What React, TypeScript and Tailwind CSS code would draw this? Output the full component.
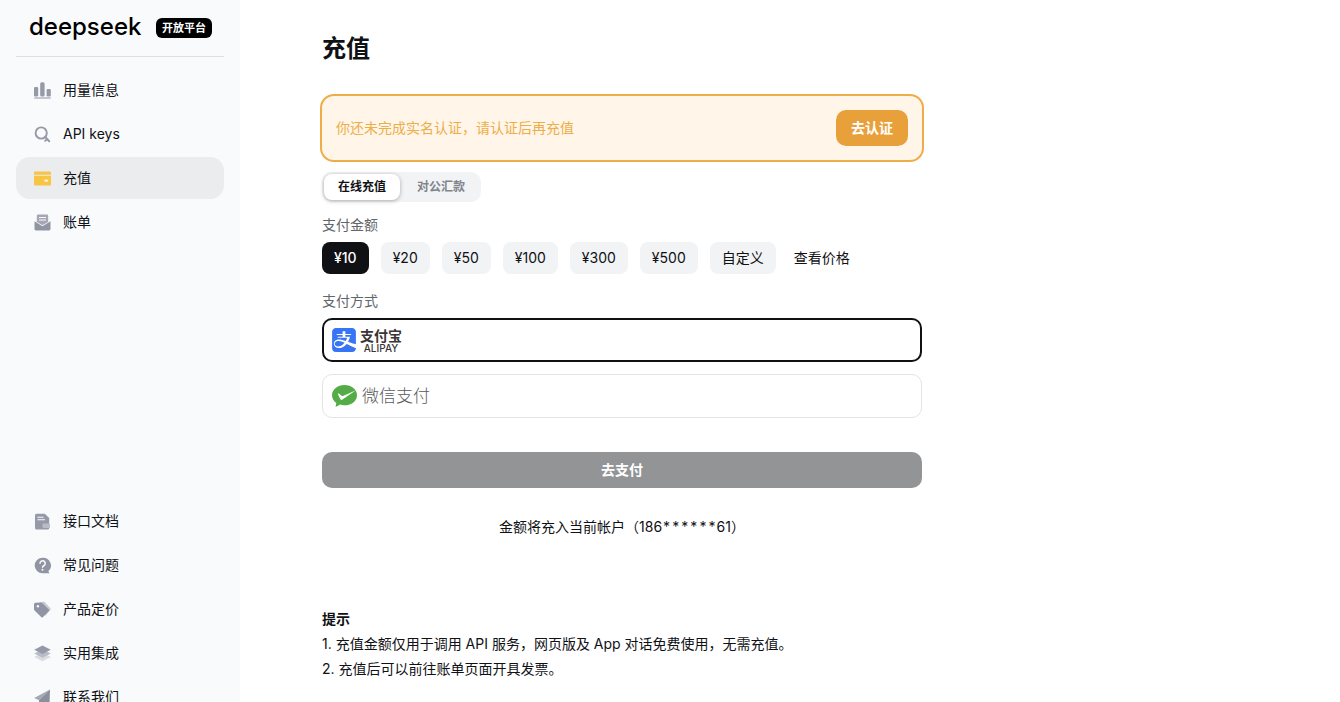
import React, { useState } from 'react';
import { SiAlipay } from 'react-icons/si';

type IconProps = { className?: string };

const IconUsage: React.FC<IconProps> = ({ className }) => (
    <svg className={className} viewBox="0 0 17 17" fill="#969aa8" aria-hidden="true">
        <rect x="0" y="5" width="4.2" height="9.5" rx="1.2" />
        <rect x="6.2" y="0.3" width="4.4" height="14.2" rx="1.5" />
        <rect x="12.6" y="7" width="4.2" height="7.5" rx="1.2" />
        <rect x="0" y="15" width="17" height="2" rx="1" fill="#c4c7cf" />
    </svg>
);

const IconKey: React.FC<IconProps> = ({ className }) => (
    <svg className={className} viewBox="0 0 17 17" fill="none" stroke="#969aa8" aria-hidden="true">
        <circle cx="7.2" cy="7" r="5.6" strokeWidth="1.9" />
        <path d="M11.3 11l3.9 4.2M13 13.200l-1.800 1.600" strokeWidth="2" strokeLinecap="round" />
    </svg>
);

const IconCard: React.FC<IconProps> = ({ className }) => (
    <svg className={className} viewBox="0 0 17 17" fill="#f7c443" aria-hidden="true">
        <path d="M1.300 1.500h14.400A1.300 1.300 0 0 1 17 2.800V4.700H0V2.800A1.300 1.300 0 0 1 1.300 1.500z" />
        <path d="M0 5.800h17v8.400a1.300 1.300 0 0 1-1.300 1.300H1.300A1.300 1.300 0 0 1 0 14.200z" />
        <rect x="10.300" y="9.400" width="4" height="2.400" rx="1.200" fill="#fff4d0" />
    </svg>
);

const IconBill: React.FC<IconProps> = ({ className }) => (
    <svg className={className} viewBox="0 0 17 17" aria-hidden="true">
        <path d="M2.800 1.800A1.300 1.300 0 0 1 4.100.5h8.800a1.300 1.300 0 0 1 1.300 1.300V8l-5.700 3.200L2.800 8z" fill="#a5a8b4" />
        <path d="M5 3.500h7M5 6h7" stroke="#f9fafc" strokeWidth="1.100" />
        <path d="M.5 7.200l8 5 8-5v7.900a1.400 1.400 0 0 1-1.400 1.400H1.900A1.400 1.400 0 0 1 .5 15.100z" fill="#9195a3" />
    </svg>
);

const IconDocs: React.FC<IconProps> = ({ className }) => (
    <svg className={className} viewBox="0 0 17 17" aria-hidden="true">
        <path d="M2.500.7h8.300l4.400 4.300v10a1.500 1.500 0 0 1-1.500 1.500H2.500A1.500 1.500 0 0 1 1 15V2.200A1.500 1.500 0 0 1 2.500.7z" fill="#969aa8" />
        <path d="M3.500 4.300h6M3.500 6.800h7.500" stroke="#f9fafc" strokeWidth="1.100" />
        <rect x="8.500" y="10.500" width="7.500" height="4.500" rx="1" fill="#b9bcc6" />
    </svg>
);

const IconFaq: React.FC<IconProps> = ({ className }) => (
    <svg className={className} viewBox="0 0 17 17" aria-hidden="true">
        <path d="M8.500.7a7.800 7.800 0 1 0 0 15.600h7l-1.200-2A7.800 7.800 0 0 0 8.500.7z" fill="#9195a3" />
        <path d="M6 6.300a2.600 2.600 0 1 1 4 2.200c-1 .6-1.500 1-1.500 1.800" fill="none" stroke="#f9fafc" strokeWidth="1.500" strokeLinecap="round" />
        <circle cx="8.500" cy="12.700" r="1" fill="#f9fafc" />
    </svg>
);

const IconPricing: React.FC<IconProps> = ({ className }) => (
    <svg className={className} viewBox="0 0 17 17" aria-hidden="true">
        <path d="M5.500 1.200L10.200.4 17 8l-5.800 7z" fill="#c9cbd3" />
        <path d="M0 3.300A1.500 1.500 0 0 1 1.400 1.800L6.900 1.400a1.800 1.800 0 0 1 1.300.5l6.700 6.500a1 1 0 0 1 0 1.500l-6.100 6.300a1 1 0 0 1-1.400 0L.6 9.500A1.800 1.800 0 0 1 0 8.200z" fill="#9195a3" />
        <circle cx="3.900" cy="5.200" r="1.200" fill="#f9fafc" />
    </svg>
);

const IconLayers: React.FC<IconProps> = ({ className }) => (
    <svg className={className} viewBox="0 0 17 17" aria-hidden="true">
        <path d="M8.500 7.800l8.300 4.200-8.300 4.300L.2 12z" fill="#dadce2" />
        <path d="M8.500 4.300l8.300 4.200-8.300 4.300L.2 8.500z" fill="#b9bcc6" />
        <path d="M8.500.6l8.300 4.200-8.300 4.300L.2 4.800z" fill="#969aa8" />
    </svg>
);

const IconContact: React.FC<IconProps> = ({ className }) => (
    <svg className={className} viewBox="0 0 17 17" aria-hidden="true">
        <path d="M16 .5L.2 9l4.800 2.200z" fill="#a5a8b4" />
        <path d="M16 .5L5 11.200V16.500l3-3.500 7.500 3z" fill="#8b8f9d" />
    </svg>
);

const IconWechatPay: React.FC<IconProps> = ({ className }) => (
    <svg className={className} viewBox="0 0 26 24" aria-hidden="true">
        <path d="M12.500 1C5.500 1 0 5.500 0 11.200c0 3.100 1.700 5.800 4.300 7.700l-.7 4.100 4.600-2.500c1.400.5 2.800.8 4.300.8 7 0 12.500-4.500 12.500-10.100S19.500 1 12.500 1z" fill="#53ac46" />
        <path d="M24 6.300L10.900 11.900c-.5.200-.9.200-1.300-.1L6.800 9.600c-.6-.4-1.100.1-.9.600l2.500 5c.4.800 1 1 1.700.6z" fill="#fff" />
    </svg>
);

const mainLinks = [
    { label: '用量信息', Icon: IconUsage },
    { label: 'API keys', Icon: IconKey },
    { label: '充值', Icon: IconCard, active: true },
    { label: '账单', Icon: IconBill },
];

const helpLinks = [
    { label: '接口文档', Icon: IconDocs },
    { label: '常见问题', Icon: IconFaq },
    { label: '产品定价', Icon: IconPricing },
    { label: '实用集成', Icon: IconLayers },
    { label: '联系我们', Icon: IconContact },
];

const amounts = ['¥10', '¥20', '¥50', '¥100', '¥300', '¥500', '自定义'];

const NavItem: React.FC<{ label: string; Icon: React.FC<IconProps>; active?: boolean }> = ({ label, Icon, active }) => (
    <a
        href="#"
        aria-current={active ? 'page' : undefined}
        className={`flex h-[42px] shrink-0 items-center gap-3 rounded-[14px] px-[18px] ${active ? 'bg-[#ebecee]' : 'hover:bg-[#f1f2f4]'}`}
    >
        <Icon className="h-[17px] w-[17px]" />
        {label}
    </a>
);

const Sidebar: React.FC = () => (
    <aside className="flex w-60 shrink-0 flex-col overflow-y-auto bg-[#f9fafc] px-4 [scrollbar-width:none]">
        <div className="flex h-14 shrink-0 items-center justify-between pl-[13px] pr-3">
            <a href="#" className="pb-0.5 text-2xl leading-8 font-medium text-black">
                deepseek
            </a>
            <span className="rounded-md bg-black px-1.5 text-[11px] leading-5 font-bold text-white">开放平台</span>
        </div>
        <hr className="border-[#dfe0e3]" />
        <nav className="mt-3 flex flex-col gap-0.5">
            {mainLinks.map((item) => (
                <NavItem key={item.label} {...item} />
            ))}
        </nav>
        <nav className="mt-auto flex flex-col gap-0.5 pt-[257px]">
            {helpLinks.map((item) => (
                <NavItem key={item.label} {...item} />
            ))}
        </nav>
    </aside>
);

const App: React.FC = () => {
    const [tab, setTab] = useState('online');
    const [amount, setAmount] = useState('¥10');
    const [method, setMethod] = useState('alipay');

    const tabClass = (active: boolean) =>
        `h-[26px] rounded-lg px-3.5 text-xs font-bold ${active ? 'bg-white text-[#0f1115] shadow-[0_1px_4px_rgba(0,0,0,0.3)]' : 'text-[#81858c]'}`;

    const methodClass = (active: boolean) =>
        `relative flex h-11 cursor-pointer items-center rounded-[10px] ${active ? 'border-2 border-[#0f1115] px-2' : 'border border-[#e3e4e7] px-[9px]'}`;

    return (
        <div className="flex h-screen bg-white font-[Inter,'Noto_Sans_CJK_SC',sans-serif] text-sm text-[#0f1115]">
            <Sidebar />
            <main className="min-w-0 flex-1 overflow-y-auto px-20 pt-[33px] [scrollbar-width:none]">
                <div className="max-w-[604px]">
                    <h1 className="px-0.5 text-2xl leading-8 font-bold">充值</h1>

                    <div className="mt-[29px] flex items-center justify-between rounded-[14px] border-2 border-[#edae49] bg-[#fff5e8] p-3.5">
                        <p className="text-[#edae49]">你还未完成实名认证，请认证后再充值</p>
                        <button type="button" className="h-9 rounded-[10px] bg-[#e8a13a] px-[15px] font-bold text-white">
                            去认证
                        </button>
                    </div>

                    <div className="px-0.5 pt-2.5">
                        <div role="tablist" className="flex w-fit gap-[3px] rounded-[10px] bg-[#f2f3f5] p-0.5">
                            <button type="button" role="tab" aria-selected={tab === 'online'} onClick={() => setTab('online')} className={tabClass(tab === 'online')}>
                                在线充值
                            </button>
                            <button type="button" role="tab" aria-selected={tab === 'bank'} onClick={() => setTab('bank')} className={tabClass(tab === 'bank')}>
                                对公汇款
                            </button>
                        </div>

                        {/* Amount */}
                        <fieldset className="mt-3">
                            <legend className="leading-[22px] text-[#61666b]">支付金额</legend>
                            <div className="mt-1.5 flex flex-wrap items-center gap-3">
                                {amounts.map((value) => (
                                    <label
                                        key={value}
                                        className={`relative flex h-8 cursor-pointer items-center rounded-lg px-3 ${
                                            amount === value ? 'bg-[#0f1115] font-medium text-white' : 'bg-[#f2f3f5]'
                                        }`}
                                    >
                                        <input type="radio" name="amount" value={value} checked={amount === value} onChange={() => setAmount(value)} className="sr-only" />
                                        {value}
                                    </label>
                                ))}
                                <a href="#" className="px-1.5">
                                    查看价格
                                </a>
                            </div>
                        </fieldset>

                        {/* Payment method */}
                        <fieldset className="mt-4">
                            <legend className="leading-[22px] text-[#61666b]">支付方式</legend>
                            <div className="mt-1.5 flex flex-col gap-3">
                                <label className={methodClass(method === 'alipay')}>
                                    <input type="radio" name="method" checked={method === 'alipay'} onChange={() => setMethod('alipay')} className="sr-only" />
                                    <SiAlipay className="h-6 w-6 text-[#3875f6]" />
                                    <span className="ml-1 flex flex-col items-center text-[#3a3536]">
                                        <span className="text-sm leading-4 font-bold">支付宝</span>
                                        <span className="text-[10px] leading-2 font-medium">ALIPAY</span>
                                    </span>
                                </label>
                                <label className={methodClass(method === 'wechat')}>
                                    <input type="radio" name="method" checked={method === 'wechat'} onChange={() => setMethod('wechat')} className="sr-only" />
                                    <IconWechatPay className="h-6 w-[26px]" />
                                    <span className="ml-1 text-[17px] leading-6 font-light text-[#5a5a5a]">微信支付</span>
                                </label>
                            </div>
                        </fieldset>

                        <button type="button" disabled className="mt-[34px] h-9 w-full rounded-[10px] bg-[#939496] font-bold text-white">
                            去支付
                        </button>
                        <p className="mt-7 text-center leading-[22px]">
                            金额将充入当前帐户（186<span className="tabular-nums">******</span>61）
                        </p>

                        <section className="mt-[68px] pb-8 leading-[25px]">
                            <h2 className="font-bold">提示</h2>
                            <p>1. 充值金额仅用于调用 API 服务，网页版及 App 对话免费使用，无需充值。</p>
                            <p>2. 充值后可以前往账单页面开具发票。</p>
                        </section>
                    </div>
                </div>
            </main>
        </div>
    );
};

export default App;
